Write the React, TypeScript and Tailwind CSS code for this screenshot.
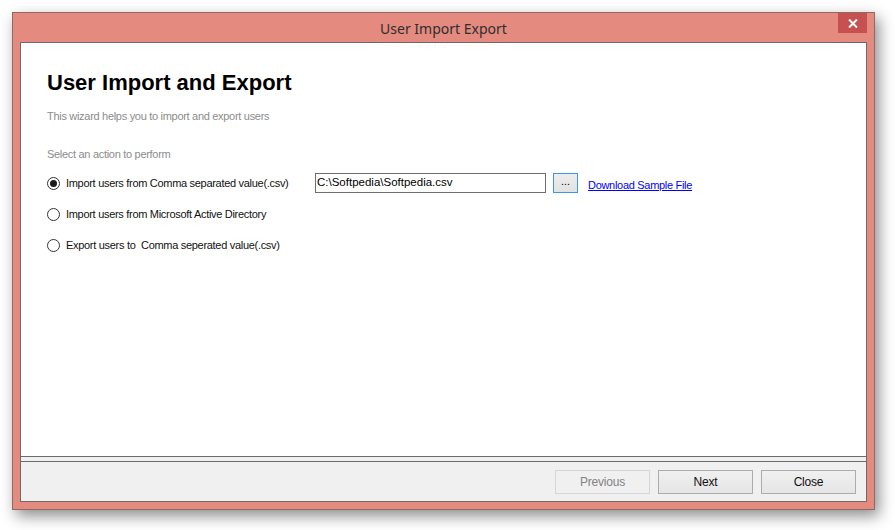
import React from "react";

function Radio({ checked }: { checked?: boolean }) {
  return (
    <span className="flex h-[13px] w-[13px] shrink-0 items-center justify-center rounded-full border border-[#333333] bg-white">
      {checked ? <span className="h-[7px] w-[7px] rounded-full bg-[#1a1a1a]" /> : null}
    </span>
  );
}

function Btn({ label, disabled }: { label: string; disabled?: boolean }) {
  return (
    <div
      className={
        disabled
          ? "flex h-[24px] w-[95px] items-center justify-center border border-[#d5d5d5] bg-[#f0f0f0] text-[#838383]"
          : "flex h-[24px] w-[95px] items-center justify-center border border-[#acacac] bg-gradient-to-b from-[#f0f0f0] to-[#e5e5e5] text-[#111111]"
      }
    >
      {label}
    </div>
  );
}

export default function App() {
  return (
    <div className="h-[530px] w-[895px] overflow-hidden bg-white pl-[12px] pt-[12px] font-['Liberation_Sans',Arial,sans-serif] text-[11px]">
      <div className="flex h-[498px] w-[863px] flex-col border border-[#8f6a65] bg-[#e58a7f] px-[7px] pb-[7px] shadow-[4px_6px_14px_rgba(0,0,0,0.45)]">
        <div className="relative flex h-[29px] shrink-0 items-center justify-center">
          <span className="mt-[1px] font-['Noto_Sans','Open_Sans',sans-serif] text-[14px] text-[#2e2e2e]">
            User Import Export
          </span>
          <div className="absolute right-[0px] top-0 flex h-[20px] w-[29px] items-center justify-center bg-[#c75050]">
            <svg width="10" height="9" viewBox="0 0 10 9">
              <path d="M1 0.5 L9 8.5 M9 0.5 L1 8.5" stroke="white" strokeWidth="2" />
            </svg>
          </div>
        </div>
        <div className="flex h-[460px] flex-col border border-[#6b6b6b] bg-[#f0f0f0]">
          <div className="flex flex-1 flex-col border-b border-[#6b6b6b] bg-white pl-[26px] pt-[28px] tracking-[-0.3px]">
            <div className="h-[24px] text-[22px] font-bold leading-[24px] tracking-normal text-black">User Import and Export</div>
            <div className="mt-[14px] h-[14px] leading-[14px] text-[#8c8c8c]">This wizard helps you to import and export users</div>
            <div className="mt-[24px] h-[14px] leading-[14px] text-[#8c8c8c]">Select an action to perform</div>
            <div className="mt-[12px] flex flex-col gap-[11px] text-[#111111]">
              <div className="flex h-[20px] items-center">
                <div className="flex w-[268px] items-center gap-[6px]">
                  <Radio checked />
                  <span>Import users from Comma separated value(.csv)</span>
                </div>
                <div className="flex h-[20px] w-[231px] items-center border border-[#6e6e6e] bg-white pl-[1px] text-[11.5px] tracking-normal text-black">
                  C:\Softpedia\Softpedia.csv
                </div>
                <div className="ml-[7px] flex h-[20px] w-[25px] items-center justify-center border border-[#3c99e0] bg-gradient-to-b from-[#ededed] to-[#e2e2e2] pb-[3px] tracking-normal text-black">
                  ...
                </div>
                <span className="ml-[10px] mt-[4px] text-[#0000ff] underline">Download Sample File</span>
              </div>
              <div className="flex h-[20px] items-center gap-[6px]">
                <Radio />
                <span>Import users from Microsoft Active Directory</span>
              </div>
              <div className="flex h-[20px] items-center gap-[6px]">
                <Radio />
                <span>Export users to&nbsp; Comma seperated value(.csv)</span>
              </div>
            </div>
          </div>
          <div className="mt-[4px] flex h-[40px] shrink-0 items-center justify-end gap-[8px] border-t border-[#6b6b6b] bg-[#f0f0f0] pr-[10px] text-[12px] tracking-[-0.2px]">
            <Btn label="Previous" disabled />
            <Btn label="Next" />
            <Btn label="Close" />
          </div>
        </div>
      </div>
    </div>
  );
}
